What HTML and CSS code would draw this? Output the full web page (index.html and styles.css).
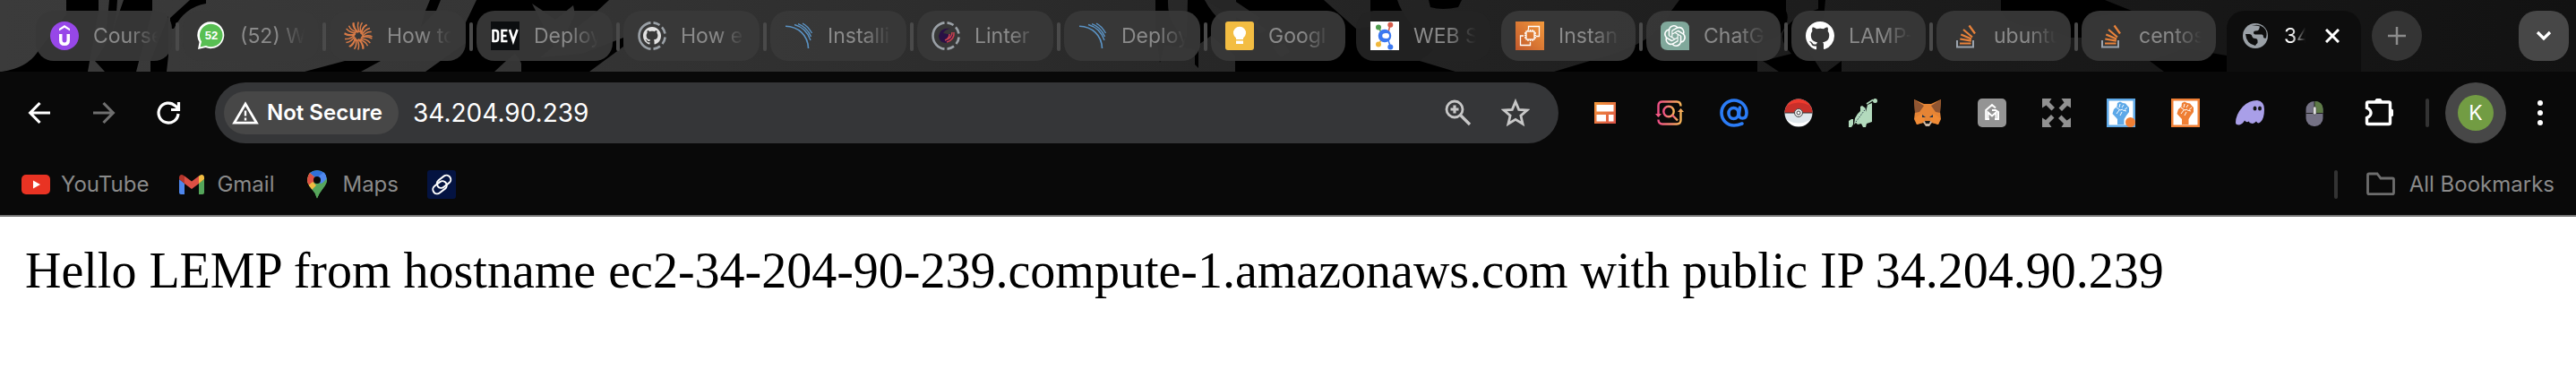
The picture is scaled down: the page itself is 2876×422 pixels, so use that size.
FILE: index.html
```html
<!DOCTYPE html>
<html lang="en">
<head>
<meta charset="utf-8">
<title>34.204.90.239</title>
<link rel="stylesheet" href="styles.css">
</head>
<body>
<svg class="sprite" aria-hidden="true">
  <symbol id="github" viewBox="0 0 16 16"><path d="M8 0C3.58 0 0 3.58 0 8c0 3.54 2.29 6.53 5.47 7.59.4.07.55-.17.55-.38 0-.19-.01-.82-.01-1.49-2.01.37-2.53-.49-2.69-.94-.09-.23-.48-.94-.82-1.13-.28-.15-.68-.52-.01-.53.63-.01 1.08.58 1.23.82.72 1.21 1.87.87 2.33.66.07-.52.28-.87.51-1.07-1.78-.2-3.64-.89-3.64-3.95 0-.87.31-1.59.82-2.15-.08-.2-.36-1.02.08-2.12 0 0 .67-.21 2.2.82.64-.18 1.32-.27 2-.27s1.36.09 2 .27c1.53-1.04 2.2-.82 2.2-.82.44 1.1.16 1.92.08 2.12.51.56.82 1.27.82 2.15 0 3.07-1.87 3.75-3.65 3.95.29.25.54.73.54 1.48 0 1.07-.01 1.93-.01 2.15 0 .21.15.46.55.38A8.01 8.01 0 0 0 16 8c0-4.42-3.58-8-8-8z"/></symbol>
  <symbol id="ring" viewBox="0 0 32 32"><g fill="none" stroke="#9aa0a6" stroke-width="2.600"><path d="M14.500 1.400A14.700 14.700 0 0 0 14.500 30.600"/><path d="M17.500 1.400A14.700 14.700 0 0 1 24.500 4M27 6.400A14.700 14.700 0 0 1 30.500 13.500M30.600 17.500A14.700 14.700 0 0 1 27.500 25M25 27.600A14.700 14.700 0 0 1 17.500 30.600"/></g></symbol>
  <symbol id="arcs" viewBox="0 0 32 32"><g fill="none" stroke="#5b93c4"><path stroke-width="1.600" d="M1 5.200C15 5.500 26 15 26.500 30"/><path stroke-width="1.400" d="M11 3.500C20 6 26 12 29 21M15 2.600C22 5 27 11 29.500 17M20 2.200C25 4.500 28 9 30.500 13"/></g></symbol>
  <symbol id="stack" viewBox="0 0 32 32"><path d="M7 21v7.500h18V21" fill="none" stroke="#9ba3ad" stroke-width="2"/><path d="M10 24.500h12.500M10.300 19.500l12.500 2.200M11.300 14.500l11.700 5M14 9l10 8.500M20.500 4.500l6.500 9" stroke="#e8823a" stroke-width="2.200" fill="none"/></symbol>
  <symbol id="fist" viewBox="0 0 32 32"><path d="M12 29v-6L6.500 17l1.500-5 3.500-3 .5-4 3-1.500 3 1.500 3 .5 2.500 3 1.500 1.500v5l-3 4-2.500 4v6z"/><path d="M11 10l4 3 3-1M15 6l-1 4M19 7l-2 3M23 10l-3 2.500M14 13l-3 4M18 13l4 1M17 15l-2 4" fill="none" stroke="#fff" stroke-width="1"/></symbol>
</svg>
<header class="browser">
  <div class="tabstrip">
    <svg class="theme" viewBox="0 0 2876 80" preserveAspectRatio="xMinYMin slice" aria-hidden="true">
      <defs><linearGradient id="shade"><stop offset="0" stop-color="#3b3b3b"/><stop offset=".2" stop-color="#353535"/><stop offset=".4" stop-color="#2b2b2b"/><stop offset=".55" stop-color="#232323"/><stop offset=".75" stop-color="#1b1b1b"/><stop offset="1" stop-color="#121212"/></linearGradient></defs>
      <rect width="2876" height="80" fill="url(#shade)"/>
      <path d="M74 0h36v12L98 80H2Q30 76 42 58L74 16zM122 0h9l-1 14-6 30h-6zM138 0h32v12L152 80h-35L106 68 124 40zM168 68l20-50v44l-2 18h-18zM190 32V20L212 0H230V4Q206 8 194 32zM480 0h12L487 12 470 30 475 12zM340 80L385 68H425L403 80zM475 80L520 48V25L532 0H680L667 12 620 50 584 80Q583 68 575 60L565 68 552 80zM582 80V66L650 60 696 42V52L658 80z"/>
      <path d="M594 4l12 8 14 10 20-16 2 10-20 44-14-28z" fill="#353535"/>
      <path d="M1290 0h14Q1303 30 1325 42L1326 0h19Q1352 14 1366 26L1380 40V0H1478L1514 32V80H1379V62L1352 40 1338 50V76L1334 72V55L1300 50 1295 70 1290 30zM1530 0h30Q1566 20 1600 56L1585 68 1625 80H1500V34L1530 30zM1595 0H1632L1628 8Q1610 12 1597 8zM1875 0H1994V12Q2000 24 1986 40L1962 50V80H1735L1775 68Q1850 50 1866 12zM2030 0h8L2036 20Q2010 40 2020 58L2034 80H1986L1968 68 2000 60Q1970 30 2030 10zM2056 68V80H2040zM2234 0H2350L2380 12 2330 20 2324 42H2312L2280 30Q2240 30 2234 12zM2400 68L2440 54 2486 62V80H2416z"/>
      <path d="M1345 0l32 0 30 20-8 10zM1396 18l18 16-8 4zM1420 52l14-4 6 10-10 6z" fill="#262626"/>
    </svg>
    <nav class="tabs" aria-label="Tabs">
      <a class="tab wide" href="#"><svg class="icon" viewBox="0 0 32 32"><circle cx="16" cy="16" r="16" fill="#9747e8"/><path d="M10 9.500V8l6-4 6 4v2.500l-6-3.700-6 3.700zM10 14h3.500v6.500q0 3 2.500 3t2.500-3V14H22v7q0 6-6 6t-6-6z" fill="#fff"/></svg><span class="label">Course</span></a>
      <a class="tab wide" href="#"><svg class="icon" viewBox="0 0 32 32"><path d="M1 31L2.500 23A15 15 0 1 1 9.500 29z" fill="#fff"/><path d="M3.500 28.500L5 22.500A12.800 12.800 0 1 1 10 27z" fill="#58bf53"/><text class="count" x="16" y="20" text-anchor="middle">52</text></svg><span class="label">(52) W</span></a>
      <a class="tab wide" href="#"><svg class="icon" viewBox="-16 -16 32 32"><g fill="none" stroke="#d97b47" stroke-width="1.500"><path id="rays" d="M4 2Q10 -2 15.500 1M4.300 .8Q9 -5 14.700 -4.500M4 -.8Q7 -7 13 -8.500M3 -2Q4 -9 9.500 -12.500"/><use href="#rays" transform="rotate(64)"/><use href="#rays" transform="rotate(124)"/><use href="#rays" transform="rotate(184)"/><use href="#rays" transform="rotate(244)"/><use href="#rays" transform="rotate(304)"/></g></svg><span class="label">How to</span></a>
      <a class="tab wide" href="#"><svg class="icon" viewBox="0 0 32 32"><rect width="32" height="32" fill="#0c0e10"/><path d="M2.500 9v14M2 10h3q3 0 3 3v6q0 3-3 3H2M18.500 10h-6v12h6M12.500 16h5M21 9l4 13L29.500 9" fill="none" stroke="#fff" stroke-width="2.600"/></svg><span class="label">Deploy</span></a>
      <a class="tab wide" href="#"><svg class="icon" viewBox="0 0 32 32"><use href="#ring"/><use href="#github" x="6" y="6" width="20" height="20" fill="#e2e2e2"/></svg><span class="label">How e</span></a>
      <a class="tab wide" href="#"><svg class="icon"><use href="#arcs"/></svg><span class="label">Installi</span></a>
      <a class="tab wide" href="#"><svg class="icon" viewBox="0 0 32 32"><use href="#ring"/><path d="M22 8Q10 6 8 16q0 7 8 8 7-1 8-9l-6-1-5-1q3-5 9-5z" fill="#2a1145"/><path d="M25 12q1 8-8 11M23 12q0 7-8 9M20 14q0 5-5 7" fill="none" stroke="#c9414f" stroke-width="1.500"/></svg><span class="label">Linter</span></a>
      <a class="tab wide" href="#"><svg class="icon"><use href="#arcs"/></svg><span class="label">Deploy</span></a>
      <a class="tab" href="#"><svg class="icon" viewBox="0 0 32 32"><rect width="32" height="32" rx="3" fill="#f3bd42"/><path d="M12 20v-1.500a7 7 0 1 1 8 0V20zM12 21.500h8v3.500h-8z" fill="#fff"/></svg><span class="label">Googl</span></a>
      <a class="tab clear" href="#"><svg class="icon" viewBox="0 0 32 32"><rect width="32" height="32" fill="#fff"/><path d="M9 6l4 8" stroke="#4f9d4e" stroke-width="1.500"/><path d="M22 4l-2 8" stroke="#d65b4a" stroke-width="1.500"/><path d="M9 25l4-5" stroke="#f0b83c" stroke-width="1.500"/><path d="M22 27l-2-6" stroke="#3b78f0" stroke-width="1.500"/><circle cx="9" cy="6.500" r="3" fill="#4f9d4e"/><circle cx="22.300" cy="3.700" r="3" fill="#d65b4a"/><circle cx="9" cy="25.500" r="3" fill="#f0b83c"/><circle cx="22.300" cy="28.500" r="3" fill="#3b78f0"/><circle cx="16" cy="16" r="5" fill="none" stroke="#3b78f0" stroke-width="4.500"/><circle cx="18" cy="16" r="3" fill="#fff"/></svg><span class="label">WEB S</span></a>
      <a class="tab" href="#"><svg class="icon" viewBox="0 0 32 32"><defs><linearGradient id="aws" x1="0" y1="1" x2="1" y2="0"><stop offset="0" stop-color="#c2592c"/><stop offset="1" stop-color="#f3993c"/></linearGradient></defs><rect width="32" height="32" fill="url(#aws)"/><g fill="none" stroke="#fff" stroke-width="1.300"><path d="M14.500 9V5.500h12v11H23M9 16H5.500v10.500h11V23"/><rect x="12" y="11" width="9" height="9"/><path d="M14 11V9M16.500 11V9M19 11V9M14 22v-2M16.500 22v-2M19 22v-2M12 13h-2M12 15.500h-2M12 18h-2M23 13h-2M23 15.500h-2M23 18h-2"/></g></svg><span class="label">Instan</span></a>
      <a class="tab" href="#"><svg class="icon" viewBox="0 0 32 32"><path d="M8 0h16q8 0 8 8v24H8q-8 0-8-8V8q0-8 8-8z" fill="#80a89b"/><path transform="translate(4 4)" fill="#fff" d="M22.2819 9.8211a5.9847 5.9847 0 0 0-.5157-4.9108 6.0462 6.0462 0 0 0-6.5098-2.9A6.0651 6.0651 0 0 0 4.9807 4.1818a5.9847 5.9847 0 0 0-3.9977 2.9 6.0462 6.0462 0 0 0 .7427 7.0966 5.98 5.98 0 0 0 .511 4.9107 6.051 6.051 0 0 0 6.5146 2.9001A5.9847 5.9847 0 0 0 13.2599 24a6.0557 6.0557 0 0 0 5.7718-4.2058 5.9894 5.9894 0 0 0 3.9977-2.9001 6.0557 6.0557 0 0 0-.7475-7.0729zm-9.022 12.6081a4.4755 4.4755 0 0 1-2.8764-1.0408l.1419-.0804 4.7783-2.7582a.7948.7948 0 0 0 .3927-.6813v-6.7369l2.02 1.1686a.071.071 0 0 1 .038.052v5.5826a4.504 4.504 0 0 1-4.4945 4.4944zm-9.6607-4.1254a4.4708 4.4708 0 0 1-.5346-3.0137l.142.0852 4.783 2.7582a.7712.7712 0 0 0 .7806 0l5.8428-3.3685v2.3324a.0804.0804 0 0 1-.0332.0615L9.74 19.9502a4.4992 4.4992 0 0 1-6.1408-1.6464zM2.3408 7.8956a4.485 4.485 0 0 1 2.3655-1.9728V11.6a.7664.7664 0 0 0 .3879.6765l5.8144 3.3543-2.0201 1.1685a.0757.0757 0 0 1-.071 0l-4.8303-2.7865A4.504 4.504 0 0 1 2.3408 7.872zm16.5963 3.8558L13.1038 8.364 15.1192 7.2a.0757.0757 0 0 1 .071 0l4.8303 2.7913a4.4944 4.4944 0 0 1-.6765 8.1042v-5.6772a.79.79 0 0 0-.407-.667zm2.0107-3.0231l-.142-.0852-4.7735-2.7818a.7759.7759 0 0 0-.7854 0L9.409 9.2297V6.8974a.0662.0662 0 0 1 .0284-.0615l4.8303-2.7866a4.4992 4.4992 0 0 1 6.6802 4.66zM8.3065 12.863l-2.02-1.1638a.0804.0804 0 0 1-.038-.0567V6.0742a4.4992 4.4992 0 0 1 7.3757-3.4537l-.142.0805L8.704 5.459a.7948.7948 0 0 0-.3927.6813zm1.0976-2.3654l2.602-1.4998 2.6069 1.4998v2.9994l-2.5974 1.4997-2.6067-1.4997Z"/></svg><span class="label">ChatG</span></a>
      <a class="tab" href="#"><svg class="icon" fill="#fff"><use href="#github"/></svg><span class="label">LAMP-</span></a>
      <a class="tab" href="#"><svg class="icon"><use href="#stack"/></svg><span class="label">ubuntu</span></a>
      <a class="tab" href="#"><svg class="icon"><use href="#stack"/></svg><span class="label">centos</span></a>
      <div class="tab active"><svg class="icon" viewBox="0 0 32 32"><circle cx="16" cy="16" r="14" fill="#9aa0a6"/><path d="M5 14h4q3 0 3.500 3 .5 2 3.500 2 2.500 0 2.500 2.500V24q-1.500 1-2.500 3-10-2-11-13zM12 4.700Q17 4 21 5.500L20 9q-1 1.500-4 1.500-2 0-2 2 0 2 3 2h6q2 0 2 3 0 1.500 3 1 2-8-3-12-5-4-12-2z" fill="#0e0e0e"/></svg><a class="label" href="#">34</a><button class="close" aria-label="Close tab"><svg viewBox="0 0 16 16"><path d="M1 1l14 14M15 1L1 15" stroke="#fff" stroke-width="3"/></svg></button></div>
    </nav>
    <button class="newtab" aria-label="New tab"><svg viewBox="0 0 20 20"><path d="M10 0v20M0 10h20" stroke="#8b8b8b" stroke-width="2.500"/></svg></button>
    <button class="search" aria-label="Search tabs"><svg viewBox="0 0 20 20"><path d="M3 6l7 7 7-7" fill="none" stroke="#fff" stroke-width="3.200"/></svg></button>
  </div>
  <div class="toolbar">
    <div class="group">
      <button class="tool" aria-label="Back"><svg class="icon" viewBox="0 0 32 32"><path d="M28 16H6M16.500 5L5.700 16l10.800 11" fill="none" stroke="#fff" stroke-width="3.200"/></svg></button>
      <button class="tool" aria-label="Forward" disabled><svg class="icon" viewBox="0 0 32 32"><path d="M4 16h22M15.500 5l10.800 11-10.800 11" fill="none" stroke="#6f6f6f" stroke-width="3.200"/></svg></button>
      <button class="tool" aria-label="Reload"><svg class="icon" viewBox="0 0 32 32"><path d="M27 17a11 11 0 1 1-3.500-9L27 11M27.500 4v8.500H19" fill="none" stroke="#fff" stroke-width="3.200"/></svg></button>
    </div>
    <div class="omnibox">
      <button class="chip"><svg viewBox="0 0 30 26"><path d="M15 3L2.500 24.200h25z" fill="none" stroke="#fff" stroke-width="2.700"/><path d="M15 10.500v6M15 18.500v3" stroke="#fff" stroke-width="2.400"/></svg>Not Secure</button>
      <input class="url" type="text" aria-label="Address" value="34.204.90.239">
      <button class="inner" aria-label="Zoom"><svg class="icon" viewBox="0 0 32 32"><circle cx="12" cy="12" r="9" fill="none" stroke="#c7c7c7" stroke-width="2.800"/><path d="M12 7.500v9M7.500 12h9M18.500 18.500L29 29" stroke="#c7c7c7" stroke-width="3.200"/></svg></button>
      <button class="inner" aria-label="Bookmark"><svg class="icon" viewBox="0 0 32 32"><path d="M16 3.500l3.700 8.800 9.300.7-7.100 6.100 2.200 9.200-8.100-4.900-8.100 4.900 2.200-9.200L3 13l9.300-.7z" fill="none" stroke="#c7c7c7" stroke-width="2.800"/></svg></button>
    </div>
    <div class="group">
      <button class="tool" aria-label="Layout"><svg class="icon" viewBox="0 0 32 32"><defs><linearGradient id="lay" x2="1" y2="1"><stop stop-color="#f49a3a"/><stop offset="1" stop-color="#dc5147"/></linearGradient></defs><path d="M4 4h24v24H4z" fill="url(#lay)"/><path d="M6.500 7h19v7.500h-19zM6.500 18H17v7.500H6.500zM20 18h5.500v7.500H20z" fill="#fff"/></svg></button>
      <button class="tool" aria-label="Capture search"><svg class="icon" viewBox="0 0 32 32"><defs><linearGradient id="cap"><stop stop-color="#ef4f86"/><stop offset="1" stop-color="#f7b458"/></linearGradient></defs><g fill="none" stroke="url(#cap)" stroke-width="2.400"><path d="M3.500 20V8q0-4.500 4.500-4.500h16q4.500 0 4.500 5M28.500 13v11q0 4.500-4.500 4.500H8q-4.500 0-4.500-5"/><circle cx="15" cy="14.500" r="5.700"/><path d="M19 18.500l6 6"/></g><path d="M0 17h7l-3.500 4zM25 15h7l-3.500-4z" fill="url(#cap)"/></svg></button>
      <button class="tool" aria-label="Mail"><svg class="icon" viewBox="0 0 32 32"><g fill="none" stroke="#2b7cf6" stroke-width="3.600" stroke-linecap="round"><path d="M25 28Q20 30 16 30A14 14 0 1 1 30 16q0 6-4.500 6T21.500 17l1-7"/><ellipse cx="15.500" cy="16.500" rx="5.500" ry="6"/></g></svg></button>
      <button class="tool" aria-label="Pokeball"><svg class="icon" viewBox="0 0 32 32"><circle cx="16" cy="16" r="15.500" fill="#dfe7ec"/><path d="M.5 16a15.500 15.500 0 0 1 31 0z" fill="#c9302a"/><path d="M3 8A15.500 15.500 0 0 1 29 8Q16 1 3 8z" fill="#ee3a2e"/><path d="M3 24a15.500 15.500 0 0 0 26 0q-13 7-26 0z" fill="#fff"/><path d="M.5 16h31" stroke="#333" stroke-width="1"/><circle cx="16" cy="16" r="4.500" fill="#eee" stroke="#444"/><circle cx="16" cy="16" r="2" fill="#fff" stroke="#444"/></svg></button>
      <button class="tool" aria-label="Dinosaur"><svg class="icon" viewBox="0 0 32 32"><path d="M0 32v-7l3-2h2v6l-2 3zM6 29l1-7 3-5 3-3V9l2-1 4 3v4l2-8 5-2v21l-6 2-1 4h-3l-2-4-4 1-2-2z" fill="#b3dabd"/><path d="M20 6l7-4.500" stroke="#b3dabd" stroke-width="1.500"/><circle cx="29.500" cy="2.500" r="2.500" fill="#b3dabd"/><path d="M8 26L20 10" stroke="#234" stroke-width="1" stroke-dasharray="1.500 1.500"/></svg></button>
      <button class="tool" aria-label="Wallet"><svg class="icon" viewBox="0 0 32 32"><path d="M1 1l11 5h8l11-5-1 14 1 8-3 6-7-2-3 3h-4l-3-3-7 2-3-6 1-8z" fill="#e58435"/><path d="M1 1l11 7-5 7-5 1zM31 1L20 8l5 7 5 1z" fill="#8f5532"/><path d="M2 22l7-5 4 5-2 5-7 2zM30 22l-7-5-4 5 2 5 7 2z" fill="#f08b36"/><path d="M10 18l4 3-4 0zM22 18l-4 3h4z" fill="#243447"/><path d="M11 26l3-1h4l3 1-3 5h-4z" fill="#c9b8a8"/><path d="M13 25h6l-1 3h-4z" fill="#161616"/></svg></button>
      <button class="tool" aria-label="Grammar"><svg class="icon" viewBox="0 0 32 32"><rect width="32" height="32" rx="5" fill="#949494"/><path d="M20 10.500L16 7l-6.800 6v10H13M11.500 23v-7.500l4.500 4 4.500-4V23M19 23h4v-8l-3-2h-4" fill="none" stroke="#fff" stroke-width="2"/></svg></button>
      <button class="tool" aria-label="Full screen"><svg class="icon" viewBox="0 0 32 32"><g fill="#919191"><path id="corner" d="M0 0h10.500L8 4l6 6-3.500 3.500-6-6L0 10.500z"/><use href="#corner" transform="rotate(90 16 16)"/><use href="#corner" transform="rotate(180 16 16)"/><use href="#corner" transform="rotate(270 16 16)"/></g></svg></button>
      <button class="tool" aria-label="Blue fist"><svg class="icon" viewBox="0 0 32 32" fill="#5ea9e8"><path d="M0 0h32v32H0z"/><path d="M2.500 2.500h27v27h-27z" fill="#fff"/><use href="#fist"/><circle cx="26.500" cy="26.500" r="5.500" fill="#ef7f35"/></svg></button>
      <button class="tool" aria-label="Orange fist"><svg class="icon" viewBox="0 0 32 32" fill="#ef7f35"><path d="M0 0h32v32H0z"/><path d="M2.500 2.500h27v27h-27z" fill="#fff"/><use href="#fist"/></svg></button>
      <button class="tool" aria-label="Ghost wallet"><svg class="icon" viewBox="0 0 32 32"><path d="M0 27Q0 18 8 9 15 2 24 2q8 1 8 10 0 10-4 14-3 3-5-.5-3 3.500-6 2-2 0-2-2-3 2-5-1-2 4-6 5-4 0-4-2.500z" fill="#a99fe8"/><ellipse cx="21.500" cy="11" rx="2" ry="2.600" fill="#161616"/><ellipse cx="27" cy="11" rx="2" ry="2.600" fill="#161616"/></svg></button>
      <button class="tool" aria-label="Mouse"><svg class="icon" viewBox="0 0 32 32"><rect x="6.500" y="3" width="19" height="28" rx="9" fill="#747184"/><path d="M16 3q9.500 0 9.500 9v4H16z" fill="#5e7a47"/><path d="M6.500 16.500h19M16 3v13" stroke="#222" stroke-width="1"/><rect x="14.500" y="9" width="3.500" height="9" rx="1.700" fill="#ddd" stroke="#333" stroke-width=".5"/></svg></button>
      <button class="tool" aria-label="Extensions"><svg class="icon" viewBox="0 0 32 32"><path d="M4 4h23q1.500 0 1.500 1.500V27q0 1.500-1.500 1.500H4Q2.500 28.500 2.500 27v-5.500q4.500-2 4.500-5.500t-4.500-5.500V5.500Q2.500 4 4 4z" fill="none" stroke="#fff" stroke-width="3.400"/><path d="M11 4a4.500 4.500 0 0 1 9 0zM29 11.500a4.500 4.500 0 0 1 0 9z" fill="#fff"/></svg></button>
    </div>
    <span class="divider"></span>
    <button class="avatar" aria-label="Profile"><span>K</span></button>
    <button class="tool" aria-label="Menu"><svg class="icon" viewBox="0 0 32 32" fill="#fff"><circle cx="16" cy="5" r="3"/><circle cx="16" cy="16" r="3"/><circle cx="16" cy="27" r="3"/></svg></button>
  </div>
  <nav class="bookmarks" aria-label="Bookmarks">
    <a class="bookmark" href="#"><svg class="icon" viewBox="0 0 32 32"><rect y="5" width="32" height="22" rx="5" fill="#e93323"/><path d="M13 11.500v9l8-4.500z" fill="#fff"/></svg>YouTube</a>
    <a class="bookmark" href="#"><svg class="icon" viewBox="0 0 32 32"><path d="M2 10l6 4.500V27H4q-2 0-2-2z" fill="#4e86ec"/><path d="M24 14.500l6-4.500v15q0 2-2 2h-4z" fill="#54a55a"/><path d="M2 10V8.500Q2 5 5 5q1 0 3 1.500v8.500z" fill="#b5352b"/><path d="M8 6.500l8 6 8-6V15l-8 6-8-6z" fill="#dd5044"/><path d="M24 6.500Q26 5 27 5q3 0 3 3.500V10l-6 5z" fill="#f2bd42"/></svg>Gmail</a>
    <a class="bookmark" href="#"><svg class="icon" viewBox="0 0 32 32"><defs><clipPath id="pin"><path d="M16 0Q26.500 .5 27 11q0 4-4.500 9.500Q18 26 16 31.500 14.500 26 9.500 20.500 5 15 5 11 5.500 .5 16 0z"/></clipPath></defs><g clip-path="url(#pin)"><path d="M0 0h32v32H0z" fill="#57a65c"/><path d="M5 22L22 3H0z" fill="#f1bb41"/><path d="M0 3h8l8 7-6 6-5 0H0z" fill="#dc4f43"/><path d="M5 18l6-5 4 4-7 7z" fill="#f1bb41"/><path d="M8 3l8 7 12-4V0H8z" fill="#3070d9"/><path d="M15 9L25 1l4 10-9 4z" fill="#5088ee"/><path d="M27 9l-9 10-6 13h15z" fill="#57a65c"/></g><circle cx="16" cy="11" r="4" fill="#080808"/></svg>Maps</a>
    <a class="bookmark" href="#" aria-label="Link"><svg class="icon" viewBox="0 0 32 32"><rect width="32" height="32" rx="3" fill="#041341"/><g fill="none" stroke="#fff" stroke-width="2"><rect x="10" y="8" width="17" height="9.500" rx="4.700" transform="rotate(-38 18.500 12.700)"/><rect x="5.500" y="14.500" width="17" height="9.500" rx="4.700" transform="rotate(-38 14 19.200)"/></g></svg></a>
    <span class="divider"></span>
    <button class="bookmark all"><svg class="icon" viewBox="0 0 32 32"><path d="M3 4h9l4 5h13q1.500 0 1.500 1.500V25q0 1.700-1.500 1.700H3Q1.500 26.700 1.500 25V5.500Q1.500 4 3 4z" fill="none" stroke="#6d6d6d" stroke-width="2.800"/></svg>All Bookmarks</button>
  </nav>
</header>
<main class="page">Hello LEMP from hostname ec2-34-204-90-239.compute-1.amazonaws.com with public IP 34.204.90.239</main>
</body>
</html>
```
FILE: styles.css
```css
* { box-sizing: border-box; }
body { margin: 0; background: #fff; }
button, input { margin: 0; padding: 0; border: 0; background: none; font: inherit; color: inherit; }
a { color: inherit; text-decoration: none; }
svg { display: block; }
.sprite { position: absolute; width: 0; height: 0; }
.icon { width: 32px; height: 32px; flex: none; }

.browser {
  background: #090909;
  border-bottom: 2px solid #747474;
  color: #8a8a8a;
  font-family: Inter, Roboto, sans-serif;
  font-size: 24px;
  line-height: 32px;
}

.tabstrip {
  position: relative;
  display: flex;
  height: 80px;
  padding: 12px 8px 0 40px;
  overflow: hidden;
}
.theme { position: absolute; top: 0; left: 0; width: 100%; height: 80px; }
.tabs { display: flex; gap: 12px; position: relative; }
.tab {
  position: relative;
  display: flex;
  align-items: center;
  gap: 16px;
  width: 150px;
  height: 56px;
  padding: 0 12px 0 16px;
  border-radius: 20px;
  background: rgba(56, 56, 56, 0.94);
  font-size: 23px;
}
.tab.wide { width: 152px; }
.tab::after {
  content: "";
  position: absolute;
  right: -8px;
  top: 13px;
  width: 4px;
  height: 32px;
  border-radius: 2px;
  background: #4a4a4a;
}
.tab.clear { background: rgba(35, 35, 35, 0.94); }
.tab:has(+ .clear)::after, .tab.clear::after, .tab:has(+ .active)::after, .tab.active::after { display: none; }
.label {
  flex: 1;
  overflow: hidden;
  white-space: nowrap;
  -webkit-mask-image: linear-gradient(to left, transparent 4px, #000 36px);
  mask-image: linear-gradient(to left, transparent 4px, #000 36px);
}
.tab.active { height: 68px; padding-bottom: 12px; border-radius: 20px 20px 0 0; background: #0d0d0d; color: #fff; }
.active .label { flex: none; width: 24px; -webkit-mask-image: linear-gradient(to left, transparent, #000 16px); mask-image: linear-gradient(to left, transparent, #000 16px); }
.close { width: 16px; height: 16px; margin-left: 6px; flex: none; }
.count { font: bold 13px "Liberation Sans", sans-serif; fill: #fff; }
.newtab, .search {
  position: relative;
  display: flex;
  align-items: center;
  justify-content: center;
  width: 56px;
  height: 56px;
}
.newtab svg, .search svg { width: 20px; height: 20px; }
.newtab { margin-left: 12px; border-radius: 50%; background: #343434; }
.search { margin-left: auto; border-radius: 20px; background: #474747; }

.toolbar { display: flex; align-items: center; padding: 12px 4px 12px 8px; }
.group { display: flex; }
.tool { display: flex; align-items: center; justify-content: center; width: 72px; height: 68px; }
.omnibox {
  flex: 1;
  display: flex;
  align-items: center;
  height: 68px;
  margin: 0 16px;
  padding: 0 16px 0 10px;
  border-radius: 34px;
  background: #353638;
  color: #fff;
}
.chip {
  display: flex;
  align-items: center;
  gap: 9px;
  height: 48px;
  padding: 0 18px 0 9px;
  border-radius: 24px;
  background: #474747;
  font-weight: 600;
}
.chip svg { width: 30px; height: 26px; }
.url { flex: 1; min-width: 0; margin-left: 16px; font-size: 28px; outline: 0; }
.inner { display: flex; align-items: center; justify-content: center; width: 64px; height: 64px; }
.divider { width: 4px; height: 32px; border-radius: 2px; background: #333; }
.toolbar .divider { margin: 0 18px 0 16px; }
.avatar {
  display: flex;
  align-items: center;
  justify-content: center;
  width: 68px;
  height: 68px;
  margin-right: 2px;
  border-radius: 50%;
  background: #474747;
  color: #fff;
}
.avatar span { width: 40px; height: 40px; border-radius: 50%; background: #729c43; font-size: 23px; line-height: 40px; }

.bookmarks { display: flex; align-items: center; gap: 32px; height: 68px; padding: 0 24px; }
.bookmark { display: flex; align-items: center; gap: 12px; }
.bookmarks .divider { margin-left: auto; }
.bookmark.all { gap: 16px; }

.page {
  padding: 28px;
  font-family: "Liberation Serif", "Times New Roman", serif;
  font-size: 56px;
  line-height: 64px;
  color: #000;
}
```
